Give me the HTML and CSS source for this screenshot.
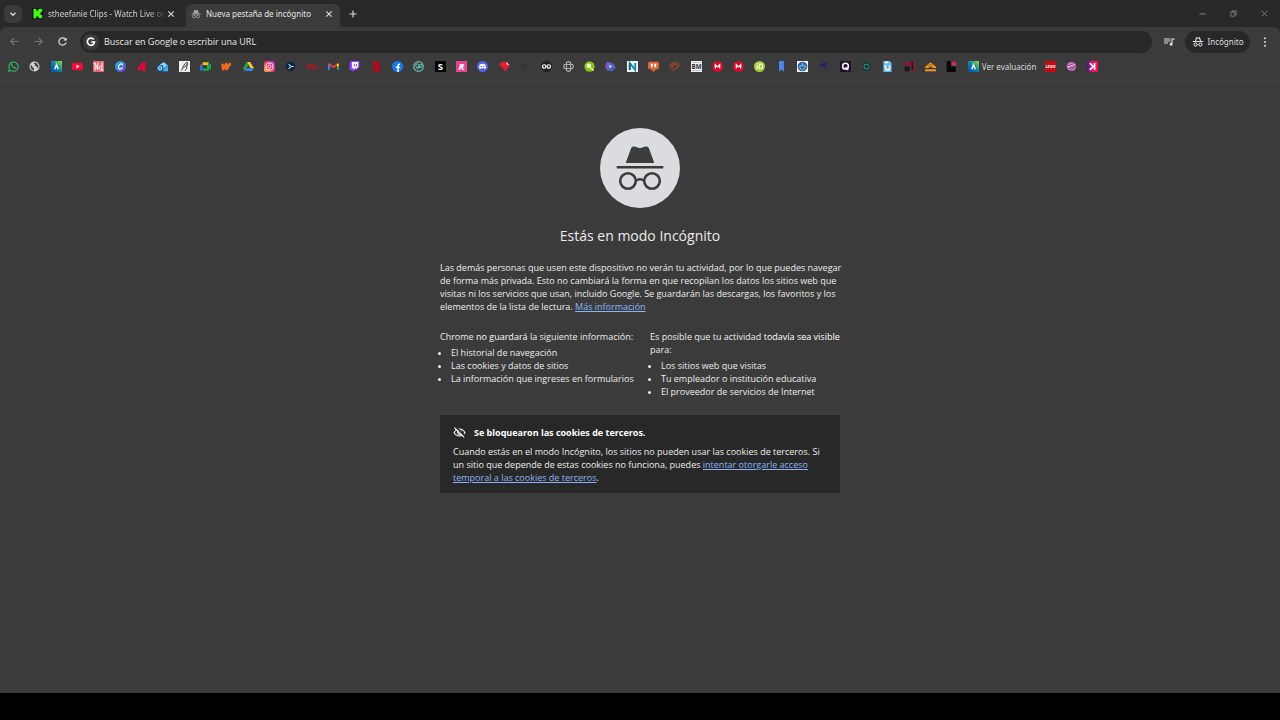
FILE: index.html
```
<!DOCTYPE html>
<html lang="es">
<head>
<meta charset="utf-8">
<title>Nueva pestaña de incógnito</title>
<link rel="stylesheet" href="styles.css">
</head>
<body>
<svg class="defs" aria-hidden="true">
  <defs>
    <linearGradient id="g-a" x1="0" y1="1" x2="1" y2="0"><stop offset="0" stop-color="#0b49b5"/><stop offset=".5" stop-color="#0a84a8"/><stop offset="1" stop-color="#9be12c"/></linearGradient>
    <linearGradient id="g-canva" x1="0" y1="0" x2="1" y2="1"><stop offset="0" stop-color="#11c4d0"/><stop offset="1" stop-color="#7630e6"/></linearGradient>
    <linearGradient id="g-insta" x1="0" y1="1" x2="1" y2="0"><stop offset="0" stop-color="#fdc53c"/><stop offset=".45" stop-color="#f0305c"/><stop offset="1" stop-color="#a32fd0"/></linearGradient>
    <linearGradient id="g-k" x1="0" y1="0" x2="1" y2="0"><stop offset="0" stop-color="#3a13a8"/><stop offset=".5" stop-color="#f0145c"/></linearGradient>
    <symbol id="i-aula" viewBox="0 0 16 16"><path d="M0 0h16v16H0z" fill="url(#g-a)"/><path d="M5.500 12 8 5.500l2.500 6.500" fill="none" stroke="#fff" stroke-width="2"/></symbol>
    <symbol id="i-close" viewBox="0 0 10 10"><path d="m2.300 2.300 5.400 5.400m0-5.400-5.400 5.400" fill="none" stroke="currentColor" stroke-width="1.100"/></symbol>
    <symbol id="i-spy" viewBox="0 0 24 24"><path d="m17.060 13c-1.860 0-3.420 1.330-3.820 3.100-.950-.410-1.820-.300-2.480-.010C10.350 14.310 8.790 13 6.940 13 4.770 13 3 14.790 3 17s1.770 4 3.940 4c2.060 0 3.740-1.620 3.900-3.680.340-.240 1.230-.690 2.320.020.180 2.050 1.840 3.660 3.900 3.660C19.230 21 21 19.210 21 17s-1.770-4-3.940-4M6.940 19.200c-1.200 0-2.150-1-2.150-2.200s.950-2.200 2.150-2.200 2.150 1 2.150 2.200-.950 2.200-2.150 2.200m10.120 0c-1.200 0-2.150-1-2.150-2.200s.950-2.200 2.150-2.200 2.150 1 2.150 2.200-.950 2.200-2.150 2.200M22.500 10h-21v2.200h21z" fill="currentColor"/><path d="m7 10 2-6.500 3 .9 3-.9 2 6.500" fill="none" stroke="currentColor" stroke-width="2.200"/></symbol>
    <symbol id="i-spy-solid" viewBox="0 0 24 24"><path d="M8 2q4 1.500 8 0l3 8H5zM1 10.500h22v2.500H1z" fill="currentColor"/><g fill="none" stroke="currentColor" stroke-width="2"><circle cx="7" cy="18" r="3.500"/><circle cx="17" cy="18" r="3.500"/><path d="M10.500 17.500h3"/></g></symbol>
    <symbol id="i-mega" viewBox="0 0 16 16"><circle cx="8" cy="8" r="8" fill="#d00c28"/><path d="M4.800 11V5.500L8 8.700l3.200-3.200V11" fill="none" stroke="#fff" stroke-width="1.800"/></symbol>
  </defs>
</svg>

<header class="browser">
  <div class="tabstrip">
    <button class="tab-search" aria-label="Buscar pestañas"><svg viewBox="0 0 10 10"><path d="m2.500 3.800 2.500 2.500 2.500-2.500" fill="none" stroke="currentColor" stroke-width="1.300"/></svg></button>
    <div class="tab">
      <svg class="favicon" viewBox="0 0 16 16"><path d="M0 0h16v16H0z" fill="#050805"/><path d="M2 1h4.500v3.500H8V3h1.500V1H15v4.500h-1.500V7H12v2h1.500v1.500H15V15H9.500v-2H8v-1.500H6.500V15H2z" fill="#42f516"/></svg>
      <span class="tab-title fade">stheefanie Clips - Watch Live on</span>
      <button class="tab-close" aria-label="Cerrar"><svg><use href="#i-close"/></svg></button>
    </div>
    <div class="tab active">
      <svg class="favicon muted"><use href="#i-spy-solid"/></svg>
      <span class="tab-title">Nueva pestaña de incógnito</span>
      <button class="tab-close" aria-label="Cerrar"><svg><use href="#i-close"/></svg></button>
    </div>
    <button class="new-tab" aria-label="Nueva pestaña"><svg viewBox="0 0 10 10"><path d="M5 1.500v7M1.500 5h7" stroke="currentColor" stroke-width="1.100"/></svg></button>
    <div class="window-controls">
      <button aria-label="Minimizar"><svg viewBox="0 0 10 10"><path d="M1.500 5.500h7" stroke="currentColor"/></svg></button>
      <button aria-label="Restaurar"><svg viewBox="0 0 10 10"><path d="M2 3.500h4.500V8H2zM3.500 3.500V2H8v4.500H6.500" fill="none" stroke="currentColor" stroke-width=".9"/></svg></button>
      <button aria-label="Cerrar ventana"><svg viewBox="0 0 10 10"><path d="m1.800 1.800 6.400 6.400m0-6.400L1.800 8.200" stroke="currentColor" stroke-width=".9"/></svg></button>
    </div>
  </div>

  <div class="toolbar">
    <div class="nav">
      <button class="dim" aria-label="Atrás"><svg viewBox="0 0 12 12"><path d="M10.500 6H2m3.800-4L1.900 6l3.900 4" fill="none" stroke="currentColor" stroke-width="1.200"/></svg></button>
      <button class="dim" aria-label="Adelante"><svg viewBox="0 0 12 12"><path d="M1.500 6H10M6.200 2l3.900 4-3.900 4" fill="none" stroke="currentColor" stroke-width="1.200"/></svg></button>
      <button aria-label="Recargar"><svg viewBox="0 0 12 12"><path d="M9.900 7A4 4 0 1 1 9 3.300L10 4.400" fill="none" stroke="currentColor" stroke-width="1.300"/><path d="M10.500 1.500V5H7z" fill="currentColor"/></svg></button>
    </div>
    <label class="omnibox">
      <span class="google"><svg viewBox="0 0 12 12"><path d="M9.400 3.100A4.300 4.300 0 1 0 10.200 6H6.200" fill="none" stroke="#fff" stroke-width="2"/></svg></span>
      <input type="text" placeholder="Buscar en Google o escribir una URL" aria-label="Buscar en Google o escribir una URL">
    </label>
    <button class="media" aria-label="Controles multimedia"><svg viewBox="0 0 24 24"><path d="M2 5h13v2H2zm0 4h13v2H2zm0 4h8v2H2zM17 5h6v2.300h-3.800V16.500a3 3 0 1 1-2.200-2.900z" fill="currentColor"/></svg></button>
    <button class="profile"><svg><use href="#i-spy"/></svg>Incógnito</button>
    <button class="more" aria-label="Menú"><svg viewBox="0 0 12 12" fill="currentColor"><circle cx="6" cy="1.500" r="1.200"/><circle cx="6" cy="6" r="1.200"/><circle cx="6" cy="10.500" r="1.200"/></svg></button>
  </div>

  <nav class="bookmarks" aria-label="Favoritos">
    <div class="strip">
      <a href="#" aria-label="WhatsApp"><svg viewBox="0 0 16 16"><path d="m1 15 1.100-3.700A6.700 6.700 0 1 1 4.600 14z" fill="none" stroke="#2fc567" stroke-width="1.500"/><path d="M5 4.500c-1.500 2 3 7.500 6 6.500l.6-1.800-2-.9-.9.800c-1-.4-1.800-1.200-2.200-2.200l.7-.8-.8-1.900z" fill="#2fc567"/></svg></a>
      <a href="#" aria-label="Sitio web"><svg viewBox="0 0 16 16"><circle cx="8" cy="8" r="7.300" fill="#d2d2d2"/><path d="M2 6c2 0 3 1 3 2.500s2 1 2.500 2.500L7 14C4 13 2 10 2 6M8 2l-1 2 2 1-1 2 3 1 2 3c2-4 0-8-5-9" fill="#484848"/></svg></a>
      <a href="#" aria-label="Aula"><svg><use href="#i-aula"/></svg></a>
      <a href="#" aria-label="YouTube"><svg viewBox="0 0 16 16"><rect y="2.500" width="16" height="11" rx="3" fill="#f20c3a"/><path d="m6.500 5.500 4.500 2.500-4.500 2.500z" fill="#fff"/></svg></a>
      <a href="#" aria-label="Nd"><svg viewBox="0 0 16 16"><rect width="16" height="16" rx="1" fill="#e66470"/><path d="M3 14V3l4 10V2m6 0v11m0-6c-4-2-5 6-1 6M1 4l2-2m9 12 3-1" fill="none" stroke="#fff" stroke-width="1.400"/></svg></a>
      <a href="#" aria-label="Canva"><svg viewBox="0 0 16 16"><circle cx="8" cy="8" r="8" fill="url(#g-canva)"/><path d="M11 6c0-4-6-1-6 3 0 4 4 3 6 .8" fill="none" stroke="#fff" stroke-width="1.700"/></svg></a>
      <a href="#" aria-label="A"><svg viewBox="0 0 16 16"><path d="M1 11 9 2l5-1v14H9l-1-3-4 2z" fill="#d70d3c"/><path d="m7 10 2-2v2z" fill="#7e1530"/></svg></a>
      <a href="#" aria-label="Outlook"><svg viewBox="0 0 16 16"><path d="m3 6 7-5 6 5v8H3z" fill="#2489dc"/><path d="m4 5 6-3 5 4-6 4z" fill="#91d4fa"/><path d="m8 14 8-7v8H6z" fill="#45b1f0"/><rect y="6" width="9" height="9" rx="1" fill="#1264b6"/><circle cx="4.500" cy="10.500" r="2.300" fill="none" stroke="#fff" stroke-width="1.400"/></svg></a>
      <a href="#" aria-label="Pluma"><svg viewBox="0 0 16 16"><path d="M0 0h16v16H0z" fill="#eee"/><path d="M3 14c3-3 3-10 9-12 2 1-2 6-6 8m6-6-1 7-2 3" fill="none" stroke="#252525" stroke-width="1.300"/></svg></a>
      <a href="#" aria-label="Meet"><svg viewBox="0 0 16 16"><path d="M4 2h9v4l3-2v9l-3-2v3H4z" fill="#16a94d"/><path d="M4 2h8v4H4z" fill="#f9bd16"/><path d="M0 6h4v8H0z" fill="#2776e8"/><path d="m0 6 4-4v4z" fill="#e4382b"/><path d="M4 6h6v5H4z" fill="#3c3c3c"/></svg></a>
      <a href="#" aria-label="Wattpad"><svg viewBox="0 0 16 16"><path d="m2 4 1 8 5-8v8l6-9" fill="none" stroke="#f26a1e" stroke-width="3.600" stroke-linejoin="round"/></svg></a>
      <a href="#" aria-label="Drive"><svg viewBox="0 0 16 16"><path d="M5.500 1.500h5l5.500 9h-5z" fill="#f8c62d"/><path d="m5.500 1.500 2.500 4-5.500 9-2.500-4z" fill="#20a657"/><path d="M5 10.500h11l-2.500 4h-11z" fill="#3f83ee"/></svg></a>
      <a href="#" aria-label="Instagram"><svg viewBox="0 0 16 16"><rect width="16" height="16" rx="3" fill="url(#g-insta)"/><rect x="3" y="3" width="10" height="10" rx="3" fill="none" stroke="#fff" stroke-width="1.400"/><circle cx="8" cy="8" r="2.300" fill="none" stroke="#fff" stroke-width="1.300"/></svg></a>
      <a href="#" aria-label="Terminal"><svg viewBox="0 0 16 16"><circle cx="8" cy="8" r="7" fill="#10273d"/><path d="m5 4.500 4 3.500-4 3.500" fill="none" stroke="#8ec7e7" stroke-width="1.800"/><path d="M10 8h2.500" stroke="#e5f4ff" stroke-width="1.500"/></svg></a>
      <a href="#" aria-label="mu"><svg viewBox="0 0 16 16"><path d="M1 11.500V6h6.500v5.500M4.300 6v5.500M10.500 5v5.500H15V5" fill="none" stroke="#c70b1d" stroke-width="1.700"/></svg></a>
      <a href="#" aria-label="Gmail"><svg viewBox="0 0 16 16"><path d="M1.500 13V4" stroke="#4285f4" stroke-width="2.700"/><path d="M14.500 13V4" stroke="#34a853" stroke-width="2.700"/><path d="m1 4 7 5 7-5" fill="none" stroke="#ea4335" stroke-width="2.700"/><path d="M13 4h3v3l-3 2z" fill="#fbbc04"/></svg></a>
      <a href="#" aria-label="Twitch"><svg viewBox="0 0 16 16"><path d="m3 0-2 3v10h4v3l3-3h3l4-4V0z" fill="#9146ff"/><path d="M4.500 1.500h9v7l-2 2H9l-2 2v-2H4.500z" fill="#fff"/><path d="M8 4v4m3-4v4" stroke="#9146ff" stroke-width="1.500"/></svg></a>
      <a href="#" aria-label="Netflix"><svg viewBox="0 0 16 16"><path d="M3 0h4v16H3zM9 0h4v16H9z" fill="#a50a19"/><path d="M3 0h4l6 16H9z" fill="#c00b1e"/></svg></a>
      <a href="#" aria-label="Facebook"><svg viewBox="0 0 16 16"><circle cx="8" cy="8" r="8" fill="#1877f2"/><path d="M8.800 16V7q0-2.500 2.800-2.200M5.500 9h5.700" fill="none" stroke="#fff" stroke-width="2.200"/></svg></a>
      <a href="#" aria-label="GoDaddy"><svg viewBox="0 0 16 16"><circle cx="8" cy="8" r="7" fill="none" stroke="#64bfb5" stroke-width="1.700"/><path d="M8 12C3 10 3 4 6 4c2 0 4 3 4 6M7 10c0-4 5-6 6-4 1 3-3 4-5 3" fill="none" stroke="#64bfb5" stroke-width="1.500"/></svg></a>
      <a href="#" aria-label="S"><svg viewBox="0 0 16 16"><path d="M0 0h16v16H0z" fill="#050505"/><text x="8" y="13" class="glyph" fill="#fff">S</text></svg></a>
      <a href="#" aria-label="R"><svg viewBox="0 0 16 16"><path d="M0 0h16v16H0z" fill="#e54493"/><text x="8" y="13" class="glyph italic" fill="#fff">R</text></svg></a>
      <a href="#" aria-label="Discord"><svg viewBox="0 0 16 16"><circle cx="8" cy="8" r="8" fill="#5562e5"/><path d="M4 5q4-2 8 0l1.500 5-2.500 1.500-1-1H6l-1 1L2.500 10z" fill="#fff"/><circle cx="6.200" cy="8" r="1" fill="#5562e5"/><circle cx="9.800" cy="8" r="1" fill="#5562e5"/></svg></a>
      <a href="#" aria-label="Diamante"><svg viewBox="0 0 16 16"><path d="m0 5 4-4h7l5 6-7 8z" fill="#de2031"/><path d="m11 1 4 5-4-1z" fill="#f6e8e8"/></svg></a>
      <a href="#" aria-label="Favorito"><svg viewBox="0 0 16 16"><path d="m3 9 5-4 5 2-4 1-4 4z" fill="#303237"/></svg></a>
      <a href="#" aria-label="Infinito"><svg viewBox="0 0 16 16"><circle cx="8" cy="8" r="8" fill="#202020"/><circle cx="4.700" cy="8" r="2.500" fill="none" stroke="#fff" stroke-width="1.700"/><circle cx="11.300" cy="8" r="2.500" fill="none" stroke="#fff" stroke-width="1.700"/></svg></a>
      <a href="#" aria-label="Nudo"><svg viewBox="0 0 16 16"><path d="M5 5V2l3-1 3 1v3h3l1 3-1 3h-3v3l-3 1-3-1v-3H2L1 8l1-3z" fill="none" stroke="#b0b0b0" stroke-width="1.600"/><path d="M5 5h6v6H5z" fill="none" stroke="#b0b0b0" stroke-width="1.500"/></svg></a>
      <a href="#" aria-label="Lima"><svg viewBox="0 0 16 16"><circle cx="8" cy="8" r="7.500" fill="#86bf18"/><circle cx="7" cy="7" r="3.500" fill="#efffc7"/><path d="m9 9 5 5" stroke="#e1ffac" stroke-width="2"/></svg></a>
      <a href="#" aria-label="Reproductor"><svg viewBox="0 0 16 16"><path d="m3 1 10 3 3 6-6 5-7-1-3-6z" fill="#4d60bd"/><path d="m3 1 6 2-5 9-4-4z" fill="#864fba"/><path d="m6 5 5 3-5 3z" fill="#9ed7ff"/></svg></a>
      <a href="#" aria-label="N"><svg viewBox="0 0 16 16"><path d="M0 0h16v16H0z" fill="#eef8fb"/><path d="M4 13V3l8 10V3" fill="none" stroke="#168bb2" stroke-width="2.700"/><path d="M4 13V3" stroke="#126a68" stroke-width="2.700"/></svg></a>
      <a href="#" aria-label="Citas"><svg viewBox="0 0 16 16"><path d="M1 1h14l1 3v7l-5 2-3 3-3-3-5-2V4z" fill="#d96539"/><path d="M4 4h3v4L5 10V8H4zm5 0h3v4l-2 2V8H9z" fill="#fff"/></svg></a>
      <a href="#" aria-label="Espiral"><svg viewBox="0 0 16 16"><path d="m8 15-7-6 2-5 5-2 5 1 2 4-5 5-5-3 1-3 4-1 3 2-3 3M1 7l4-1 3-3" fill="none" stroke="#b64b2c" stroke-width="1.300"/></svg></a>
      <a href="#" aria-label="BM"><svg viewBox="0 0 16 16"><path d="M0 0h16v16H0z" fill="#f3f3f3"/><path d="M1 2h14M1 14h14" stroke="#aaa"/><text x="8" y="11.500" class="glyph small" fill="#252d32">BM</text></svg></a>
      <a href="#" aria-label="Mega"><svg><use href="#i-mega"/></svg></a>
      <a href="#" aria-label="Mega 2"><svg><use href="#i-mega"/></svg></a>
      <a href="#" aria-label="iD"><svg viewBox="0 0 16 16"><circle cx="8" cy="8" r="8" fill="#a6ce39"/><path d="M4.500 6v6M4.500 3.500V5M7.500 4.500h2q3 0 3 3.300t-3 3.200h-2z" fill="none" stroke="#fff" stroke-width="1.500"/></svg></a>
      <a href="#" aria-label="Marcador"><svg viewBox="0 0 16 16"><path d="M4.500 0h7v16L8 12.500 4.500 16z" fill="#5187e6"/></svg></a>
      <a href="#" aria-label="Escudo"><svg viewBox="0 0 16 16"><path d="M0 0h16v16H0z" fill="#f2f7fc"/><circle cx="8" cy="8" r="7" fill="#2b649f"/><path d="M4 7h8v2q-1 3-4 4-3-1-4-4zM8 3v3" fill="none" stroke="#c0dcf1" stroke-width="1.100"/></svg></a>
      <a href="#" aria-label="Violeta"><svg viewBox="0 0 16 16"><path d="m1 6 7-4h6l-2 4v8l-2-1V8L7 9z" fill="#302262"/></svg></a>
      <a href="#" aria-label="Q"><svg viewBox="0 0 16 16"><rect width="16" height="16" rx="1" fill="#20102b"/><circle cx="8" cy="7.500" r="4.200" fill="none" stroke="#fff" stroke-width="2.200"/><path d="m8 9 4 4" stroke="#fff" stroke-width="2"/></svg></a>
      <a href="#" aria-label="Órbita"><svg viewBox="0 0 16 16"><path d="m7 1 7 4v6l-6 4-5-3V4z" fill="#202829"/><circle cx="8" cy="8" r="3.500" fill="none" stroke="#168c82" stroke-width="1.800"/></svg></a>
      <a href="#" aria-label="U"><svg viewBox="0 0 16 16"><path d="M2 0h9l3 3v13H2z" fill="#65b8f1"/><path d="M4 2h5M5 6v4q0 3 3 3t3-3V6" fill="none" stroke="#fff" stroke-width="2.200"/></svg></a>
      <a href="#" aria-label="Granate"><svg viewBox="0 0 16 16"><path d="M0 1h10v8L5 6H0zM12 1h4v14h-4z" fill="#8d162c"/><path d="M1 8h7v7H1zM11 1h2v12h-2z" fill="#171719"/></svg></a>
      <a href="#" aria-label="Casa"><svg viewBox="0 0 16 16"><path d="m1 9 7-6 7 6h-3.500L8 6.500 4.500 9z" fill="none" stroke="#f29422" stroke-width="2"/><path d="M0 12h16v3H0z" fill="#f29422"/></svg></a>
      <a href="#" aria-label="Bloques"><svg viewBox="0 0 16 16"><path d="M1 0h6v8h7v8H1z" fill="#080808"/><path d="M8 1h7v6H8z" fill="#bd3349"/></svg></a>
      <a href="#" class="labelled"><svg><use href="#i-aula"/></svg><span>Ver evaluación</span></a>
    </div>
    <div class="strip-end">
      <a href="#" aria-label="Lego"><svg viewBox="0 0 16 16"><path d="M0 0h16v16H0z" fill="#c40a12"/><text x="8" y="10.500" class="glyph tiny italic" fill="#fff">LEGO</text></svg></a>
      <a href="#" aria-label="Esfera"><svg viewBox="0 0 16 16"><circle cx="8" cy="8" r="6.700" fill="#d77bc0"/><path d="m3 7 9-3m-8 7 10-4M6 14l7-5" stroke="#744382" stroke-width="1.400"/><path d="m2 9 11-4" stroke="#ffe3f7"/></svg></a>
      <a href="#" aria-label="K"><svg viewBox="0 0 16 16"><path d="M0 0h16v16H0z" fill="url(#g-k)"/><path d="M11 3v10M4 3l5 5-5 5" fill="none" stroke="#fff" stroke-width="2.400"/></svg></a>
    </div>
  </nav>
</header>

<main class="page">
  <article class="incognito">
    <svg class="hero" viewBox="0 0 80 80"><circle cx="40" cy="40" r="40" fill="#dadce0"/><path d="m25.700 35 5.300-14.600q1-2.700 3.800-1.800l5.200 1.600 5.200-1.600q2.800-.9 3.800 1.800L54.300 35zM16.700 38h46.600v2.600H16.700z" fill="#3c3c3c"/><g fill="none" stroke="#3c3c3c" stroke-width="2.600"><circle cx="28" cy="53" r="7.800"/><circle cx="52" cy="53" r="7.800"/><path d="M35.800 52.500q4.200-2.600 8.400 0"/></g></svg>
    <h1>Estás en modo Incógnito</h1>
    <p class="intro">Las demás personas que usen este dispositivo no verán tu actividad, por lo que puedes navegar<br>de forma más privada. Esto no cambiará la forma en que recopilan los datos los sitios web que<br>visitas ni los servicios que usan, incluido Google. Se guardarán las descargas, los favoritos y los<br>elementos de la lista de lectura. <a href="#">Más información</a></p>
    <div class="columns">
      <section>
        <p>Chrome <em>no guardará</em> la siguiente información:</p>
        <ul><li>El historial de navegación</li><li>Las cookies y datos de sitios</li><li>La información que ingreses en formularios</li></ul>
      </section>
      <section>
        <p>Es posible que tu actividad <em>todavía sea visible</em><br>para:</p>
        <ul><li>Los sitios web que visitas</li><li>Tu empleador o institución educativa</li><li>El proveedor de servicios de Internet</li></ul>
      </section>
    </div>
    <section class="cookies">
      <h2><svg viewBox="0 0 24 24"><path d="M2 12q3.500-6.500 10-6.500T22 12q-3.500 6.500-10 6.500T2 12z" fill="none" stroke="currentColor" stroke-width="2"/><circle cx="12" cy="12" r="3.500" fill="none" stroke="currentColor" stroke-width="2"/><path d="m5 1.500 17 17" stroke="#282828" stroke-width="3"/><path d="m2.500 3 18 18" stroke="currentColor" stroke-width="2"/></svg>Se bloquearon las cookies de terceros.</h2>
      <p>Cuando estás en el modo Incógnito, los sitios no pueden usar las cookies de terceros. Si<br>un sitio que depende de estas cookies no funciona, puedes <a href="#">intentar otorgarle acceso<br>temporal a las cookies de terceros</a>.</p>
    </section>
  </article>
</main>
<footer class="letterbox"></footer>
</body>
</html>
```
FILE: styles.css
```
* { box-sizing: border-box; }
body {
  margin: 0;
  min-height: 100vh;
  display: flex;
  flex-direction: column;
  background: #3b3b3b;
  color: #ececec;
  font: 9px/13px "Open Sans", "Noto Sans", sans-serif;
}
h1, h2, p, ul { margin: 0; padding: 0; }
svg { display: block; flex: none; }
.defs { position: absolute; width: 0; height: 0; }
button {
  display: flex;
  align-items: center;
  justify-content: center;
  padding: 0;
  border: 0;
  background: none;
  color: #dedede;
  font: inherit;
}

.browser { background: #292929; }
.tabstrip { display: flex; align-items: stretch; height: 27px; padding-left: 4px; }
.tab-search {
  align-self: center;
  width: 18px;
  height: 18px;
  border-radius: 6px;
  background: #3b3b3b;
}
.tab-search svg, .tab-close svg { width: 10px; height: 10px; }
.tab {
  display: flex;
  align-items: center;
  width: 154px;
  margin: 4px 0 0 5px;
  padding: 0 6px 4px 5px;
  border-radius: 7px 7px 0 0;
  color: #cfcfcf;
}
.tab, .profile, .labelled { font-family: "Noto Sans", "Open Sans", sans-serif; font-size: 8px; }
.tab.active { background: #3b3b3b; color: #e6e6e6; }
.favicon { width: 11px; height: 11px; margin-right: 5px; }
.muted { width: 10px; height: 10px; color: #a5a5a5; }
.tab-title { flex: 1; white-space: nowrap; }
.fade { mask-image: linear-gradient(to right, #000 85%, transparent); }
.new-tab { width: 26px; }
.new-tab svg { width: 10px; height: 10px; }
.window-controls { display: flex; margin-left: auto; }
.window-controls button { width: 31px; color: #888; }
.window-controls svg { width: 9px; height: 9px; }

.toolbar {
  display: flex;
  align-items: center;
  height: 29px;
  padding: 0 3px 0 4px;
  border-radius: 7px 7px 0 0;
  background: #3b3b3b;
}
.nav { display: flex; }
.nav button { width: 24px; height: 22px; padding-right: 4px; }
.nav svg { width: 11px; height: 11px; }
.nav .dim { color: #777; }
.omnibox {
  flex: 1;
  display: flex;
  align-items: center;
  gap: 5px;
  height: 22px;
  margin-left: 4px;
  padding-left: 3px;
  border-radius: 11px;
  background: #282828;
}
.google { display: flex; align-items: center; justify-content: center; width: 16px; height: 16px; border-radius: 8px; background: #3b3b3b; }
.google svg { width: 10px; height: 10px; }
.omnibox input { flex: 1; padding: 0; border: 0; outline: 0; background: none; color: #e8e8e8; font: inherit; }
.omnibox input::placeholder { color: #e8e8e8; opacity: 1; }
.media { width: 33px; }
.media svg { width: 12px; height: 12px; }
.profile { gap: 4px; width: 65px; height: 22px; border-radius: 11px; background: #282828; }
.profile svg { width: 12px; height: 12px; }
.more { width: 24px; margin-left: 3px; }
.more svg { width: 10px; height: 10px; }

.bookmarks {
  display: flex;
  align-items: center;
  height: 25px;
  padding: 0 8px 3px;
  border-bottom: 1px solid #424242;
  background: #3b3b3b;
}
.bookmarks svg { width: 11px; height: 11px; }
.bookmarks a { color: #d8d8d8; text-decoration: none; }
.strip { display: flex; justify-content: space-between; width: 971px; }
.strip a { width: 11px; }
.strip .labelled { display: flex; align-items: center; gap: 3px; height: 11px; white-space: nowrap; }
.strip-end { display: flex; gap: 10px; margin-left: 66px; }
.glyph { font: 700 14px "Open Sans", sans-serif; text-anchor: middle; }
.glyph.italic { font-style: italic; }
.glyph.small { font-size: 9px; }
.glyph.tiny { font-size: 6px; }

.page { flex: 1; padding: 47px 20px 20px; }
.incognito { max-width: 400px; margin: 0 auto; }
.hero { width: 80px; height: 80px; margin: 0 auto; }
h1 { margin-top: 18px; font-size: 14px; font-weight: 400; line-height: 20px; text-align: center; }
.intro { margin-top: 15px; white-space: nowrap; }
.incognito a { color: #8ab4f8; }
.columns { display: grid; grid-template-columns: repeat(2, minmax(0, 1fr)); column-gap: 20px; margin-top: 17px; white-space: nowrap; }
.columns em { color: #fff; font-style: normal; }
.columns ul { margin-top: 3px; padding-left: 11px; }
.cookies { margin-top: 17px; padding: 11px 13px 9px; border-radius: 1px; background: #282828; white-space: nowrap; }
.cookies h2 { display: flex; align-items: center; gap: 8px; margin-bottom: 6px; color: #fff; font-size: 9px; font-weight: 700; line-height: 13px; }
.cookies h2 svg { width: 13px; height: 13px; }
.letterbox { height: 27px; background: #000; }
```
